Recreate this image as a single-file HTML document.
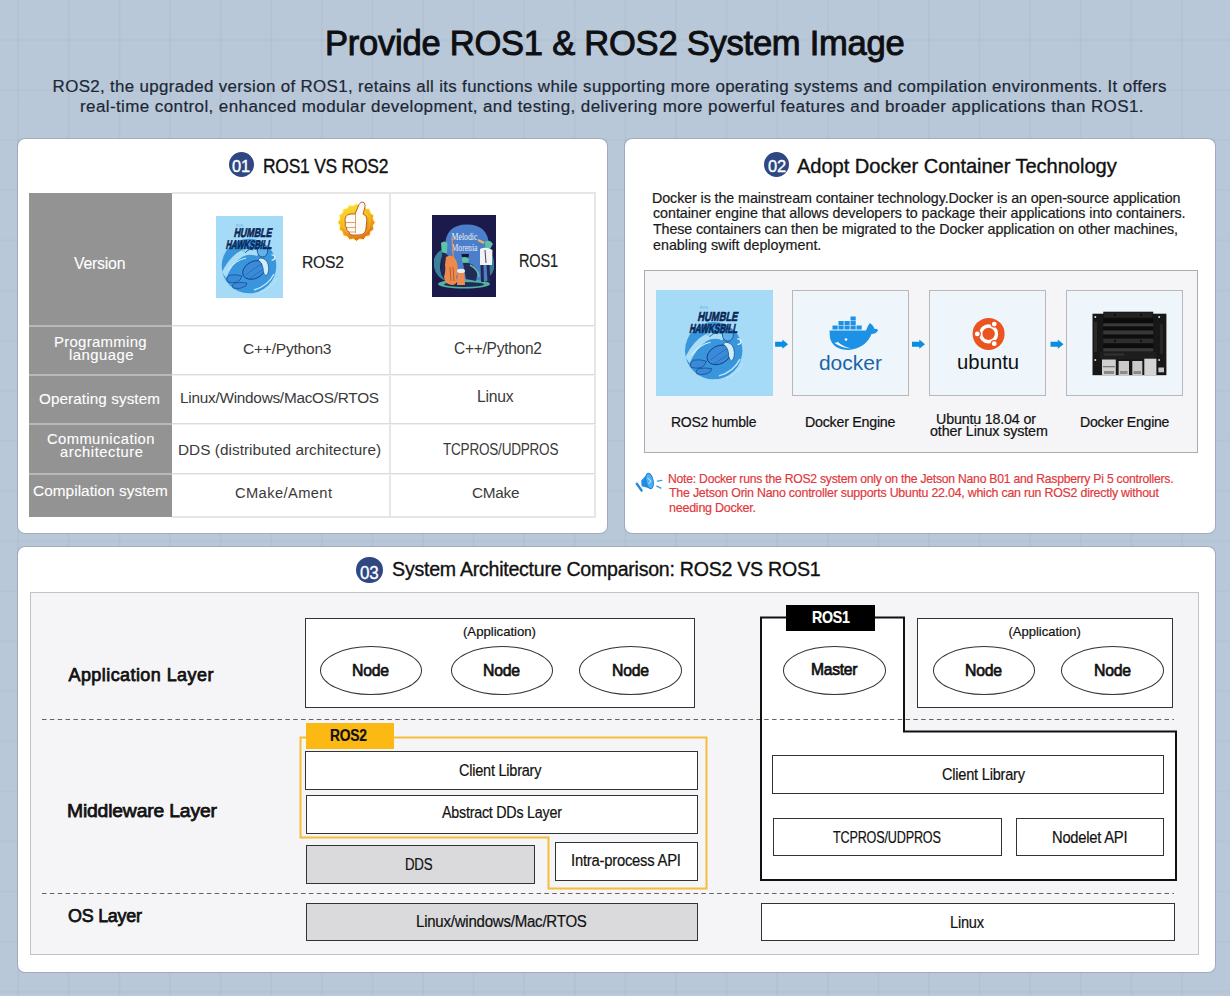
<!DOCTYPE html><html><head><meta charset="utf-8"><style>
*{margin:0;padding:0;box-sizing:border-box}
html,body{width:1230px;height:996px;overflow:hidden}
body{position:relative;font-family:"Liberation Sans",sans-serif;
background-color:#b9c8d8;
background-image:
 linear-gradient(90deg, rgba(140,160,182,0.13) 1.5px, transparent 1.5px),
 linear-gradient(0deg, rgba(140,160,182,0.1) 1.5px, transparent 1.5px);
background-size:50.6px 50.1px;background-position:17.3px 41px;}
.t{position:absolute;white-space:nowrap;-webkit-text-stroke:0.2px currentColor}
.r{position:absolute}
.panel{position:absolute;background:#fff;border-radius:7px;box-shadow:0 0 0 1px rgba(140,150,165,0.55)}
svg{position:absolute;overflow:visible}
</style></head><body>
<div class="panel" style="left:18px;top:139px;width:589px;height:394px"></div>
<div class="panel" style="left:625px;top:139px;width:590px;height:394px"></div>
<div class="panel" style="left:18px;top:547px;width:1197px;height:425px"></div>
<div class="t" style="left:325.26px;top:25.73px;font-size:34.78px;line-height:34.78px;letter-spacing:-0.250px;color:#0d0f12;font-weight:400;transform:scaleX(0.9936);transform-origin:0 0;-webkit-text-stroke:0.95px #0d0f12">Provide ROS1 &amp; ROS2 System Image</div>
<div class="t" style="left:52.62px;top:79.23px;font-size:16.90px;line-height:16.90px;letter-spacing:0.346px;color:#1c2735;font-weight:400;">ROS2, the upgraded version of ROS1, retains all its functions while supporting more operating systems and compilation environments. It offers</div>
<div class="t" style="left:80.14px;top:99.23px;font-size:16.90px;line-height:16.90px;letter-spacing:0.404px;color:#1c2735;font-weight:400;transform:scaleX(1.0051);transform-origin:0 0;">real-time control, enhanced modular development, and testing, delivering more powerful features and broader applications than ROS1.</div>
<div class="r" style="left:228.5px;top:151.5px;width:25px;height:25px;border-radius:50%;background:#2f4782"></div>
<div class="t" style="left:232.02px;top:159.49px;font-size:16.96px;line-height:16.96px;letter-spacing:-0.250px;color:#fff;font-weight:400;transform:scaleX(0.9711);transform-origin:0 0;-webkit-text-stroke:0.35px #fff">01</div>
<div class="t" style="left:263.16px;top:155.78px;font-size:20.14px;line-height:20.14px;letter-spacing:-0.250px;color:#111;font-weight:400;transform:scaleX(0.8656);transform-origin:0 0;-webkit-text-stroke:0.35px #111">ROS1 VS ROS2</div>
<div class="r" style="left:29px;top:193px;width:143px;height:324px;background:#939393"></div>
<div class="r" style="left:29px;top:325px;width:143px;height:2px;background:#b9b9b9"></div>
<div class="r" style="left:29px;top:374px;width:143px;height:2px;background:#b9b9b9"></div>
<div class="r" style="left:29px;top:423px;width:143px;height:2px;background:#b9b9b9"></div>
<div class="r" style="left:29px;top:473px;width:143px;height:2px;background:#b9b9b9"></div>
<div class="r" style="left:172px;top:192px;width:424px;height:2px;background:#e6e6e6"></div>
<div class="r" style="left:172px;top:516px;width:424px;height:2px;background:#e6e6e6"></div>
<div class="r" style="left:594px;top:192px;width:2px;height:326px;background:#e6e6e6"></div>
<div class="r" style="left:389px;top:192px;width:2px;height:326px;background:#e6e6e6"></div>
<div class="r" style="left:172px;top:325px;width:424px;height:1px;background:#dcdcdc"></div>
<div class="r" style="left:172px;top:326px;width:424px;height:1px;background:#f0f0f0"></div>
<div class="r" style="left:172px;top:374px;width:424px;height:1px;background:#dcdcdc"></div>
<div class="r" style="left:172px;top:375px;width:424px;height:1px;background:#f0f0f0"></div>
<div class="r" style="left:172px;top:423px;width:424px;height:1px;background:#dcdcdc"></div>
<div class="r" style="left:172px;top:424px;width:424px;height:1px;background:#f0f0f0"></div>
<div class="r" style="left:172px;top:473px;width:424px;height:1px;background:#dcdcdc"></div>
<div class="r" style="left:172px;top:474px;width:424px;height:1px;background:#f0f0f0"></div>
<div class="t" style="left:74.46px;top:255.18px;font-size:16.38px;line-height:16.38px;letter-spacing:-0.250px;color:#ffffff;font-weight:400;transform:scaleX(0.9699);transform-origin:0 0;-webkit-text-stroke:0.1px #fff">Version</div>
<div class="t" style="left:53.58px;top:334.59px;font-size:14.60px;line-height:14.60px;letter-spacing:0.310px;color:#ffffff;font-weight:400;transform:scaleX(1.0203);transform-origin:0 0;-webkit-text-stroke:0.1px #fff">Programming</div>
<div class="t" style="left:69.10px;top:348.09px;font-size:14.60px;line-height:14.60px;letter-spacing:0.489px;color:#ffffff;font-weight:400;transform:scaleX(1.0163);transform-origin:0 0;-webkit-text-stroke:0.1px #fff">language</div>
<div class="t" style="left:39.04px;top:391.08px;font-size:15.20px;line-height:15.20px;letter-spacing:0.101px;color:#ffffff;font-weight:400;transform:scaleX(1.0036);transform-origin:0 0;-webkit-text-stroke:0.1px #fff">Operating system</div>
<div class="t" style="left:46.52px;top:431.99px;font-size:14.60px;line-height:14.60px;letter-spacing:0.386px;color:#ffffff;font-weight:400;transform:scaleX(1.0134);transform-origin:0 0;-webkit-text-stroke:0.1px #fff">Communication</div>
<div class="t" style="left:60.00px;top:445.19px;font-size:14.60px;line-height:14.60px;letter-spacing:0.574px;color:#ffffff;font-weight:400;transform:scaleX(1.0049);transform-origin:0 0;-webkit-text-stroke:0.1px #fff">architecture</div>
<div class="t" style="left:32.58px;top:483.08px;font-size:15.20px;line-height:15.20px;letter-spacing:0.046px;color:#ffffff;font-weight:400;transform:scaleX(1.0121);transform-origin:0 0;-webkit-text-stroke:0.1px #fff">Compilation system</div>
<div class="t" style="left:301.60px;top:253.54px;font-size:17.25px;line-height:17.25px;letter-spacing:-0.250px;color:#222;font-weight:400;transform:scaleX(0.9095);transform-origin:0 0;">ROS2</div>
<div class="t" style="left:519.08px;top:252.38px;font-size:18.26px;line-height:18.26px;letter-spacing:-0.250px;color:#222;font-weight:400;transform:scaleX(0.7965);transform-origin:0 0;">ROS1</div>
<div class="t" style="left:243.10px;top:340.57px;font-size:15.22px;line-height:15.22px;letter-spacing:-0.217px;color:#3a3a3a;font-weight:400;transform:scaleX(1.0212);transform-origin:0 0;-webkit-text-stroke:0">C++/Python3</div>
<div class="t" style="left:454.14px;top:340.83px;font-size:16.67px;line-height:16.67px;letter-spacing:-0.250px;color:#3a3a3a;font-weight:400;transform:scaleX(0.9283);transform-origin:0 0;-webkit-text-stroke:0">C++/Python2</div>
<div class="t" style="left:180.10px;top:389.57px;font-size:15.22px;line-height:15.22px;letter-spacing:-0.250px;color:#3a3a3a;font-weight:400;transform:scaleX(1.0078);transform-origin:0 0;-webkit-text-stroke:0">Linux/Windows/MacOS/RTOS</div>
<div class="t" style="left:476.60px;top:389.20px;font-size:15.65px;line-height:15.65px;letter-spacing:-0.250px;color:#3a3a3a;font-weight:400;transform:scaleX(1.0041);transform-origin:0 0;-webkit-text-stroke:0">Linux</div>
<div class="t" style="left:178.16px;top:441.57px;font-size:15.22px;line-height:15.22px;letter-spacing:0.048px;color:#3a3a3a;font-weight:400;transform:scaleX(1.0060);transform-origin:0 0;-webkit-text-stroke:0">DDS (distributed architecture)</div>
<div class="t" style="left:442.54px;top:441.65px;font-size:15.94px;line-height:15.94px;letter-spacing:-0.250px;color:#3a3a3a;font-weight:400;transform:scaleX(0.8487);transform-origin:0 0;-webkit-text-stroke:0">TCPROS/UDPROS</div>
<div class="t" style="left:234.62px;top:485.68px;font-size:14.49px;line-height:14.49px;letter-spacing:0.399px;color:#3a3a3a;font-weight:400;transform:scaleX(1.0127);transform-origin:0 0;-webkit-text-stroke:0">CMake/Ament</div>
<div class="t" style="left:472.14px;top:484.57px;font-size:15.22px;line-height:15.22px;letter-spacing:-0.250px;color:#3a3a3a;font-weight:400;transform:scaleX(1.0068);transform-origin:0 0;-webkit-text-stroke:0">CMake</div>
<svg style="left:216px;top:216px;background:#a5dbf6;overflow:hidden" width="67" height="82" viewBox="0 0 67 82" preserveAspectRatio="xMidYMid meet">
<rect x="-40" y="-40" width="150" height="170" fill="#a5dbf6"/>
<text x="20" y="10.6" font-family="Liberation Sans" font-size="3.4" fill="#6aa6d8">ROS</text>
<g transform="translate(0 -4)">
<circle cx="33" cy="54" r="27.3" fill="#3996dc"/>
<path d="M6 60 Q14 44 26 38 Q36 35 44 40 L41 44 Q33 41 26 45 Q16 52 10 66 Z" fill="#a9ddf6"/>
<path d="M12 58 Q20 48 30 46" stroke="#d6f0fb" stroke-width="1" fill="none"/>
<path d="M24 68 Q20 72 12 70 Q9 66 14 63 Q20 62 26 64 Z" fill="#3a8ad8" stroke="#0d3b80" stroke-width="0.6"/>
<path d="M30 74 Q24 78 17 76 Q15 73 19 71 Q25 70 31 71 Z" fill="#3a8ad8" stroke="#0d3b80" stroke-width="0.6"/>
<ellipse cx="38" cy="58" rx="12" ry="8.5" transform="rotate(-28 38 58)" fill="#3a8ad8" stroke="#0d3b80" stroke-width="0.8"/>
<path d="M30 63 Q38 56 46 52 M33 67 Q41 61 48 57" stroke="#1f66b8" stroke-width="0.7" fill="none"/>
<path d="M44 46 Q50 46 52 52 Q54 60 50 64 Q47 62 47 56 Q46 50 42 48 Z" fill="#cfeefb" stroke="#0d3b80" stroke-width="0.6"/>
<ellipse cx="46.5" cy="39" rx="5.2" ry="6" fill="#5fb1ea" stroke="#0d3b80" stroke-width="0.7"/>
<path d="M29 41 Q33 36 37 38" stroke="#0d3b80" stroke-width="0.8" fill="none"/>
<circle cx="27.5" cy="38.5" r="1.6" fill="#7cc6f0"/>
<path d="M55.5 43 A2.6 2.6 0 1 1 55.6 48" stroke="#e8f7fd" stroke-width="1.2" fill="none"/>
<path d="M38 78 Q52 74 58 62" stroke="#bde6f9" stroke-width="1.4" fill="none"/>
<path d="M44 80 Q56 76 61 66" stroke="#bde6f9" stroke-width="0.9" fill="none"/>
</g>
<g transform="skewX(-12)" font-family="Liberation Sans" font-weight="700" fill="#0b2656" stroke="#0b2656" stroke-width="0.6">
<text x="41" y="21.4" text-anchor="middle" font-size="12.5" textLength="38" lengthAdjust="spacingAndGlyphs">HUMBLE</text>
<text x="39.5" y="33.2" text-anchor="middle" font-size="12.5" textLength="46" lengthAdjust="spacingAndGlyphs">HAWKSBILL</text>
</g>
</svg>
<svg style="left:432px;top:215px;overflow:hidden" width="64" height="82" viewBox="0 0 64 82" preserveAspectRatio="none">
<rect width="64" height="82" fill="#1b1a4b"/>
<path d="M13 66 L13 32 Q13 9.5 35 9.5 Q57 9.5 57 32 L57 66 Z" fill="#4b7fcb"/>
<path d="M2 44 Q6 34 14 34 Q8 42 8 52 Q8 60 14 66 Q4 62 2 52 Z" fill="#3f95a8" opacity="0.85"/>
<path d="M62 46 Q60 36 54 34 Q58 44 57 54 Q56 62 50 66 Q60 62 62 54 Z" fill="#3f95a8" opacity="0.8"/>
<ellipse cx="32" cy="69" rx="26" ry="4.6" fill="#4fb3a0"/>
<ellipse cx="32" cy="69.5" rx="20" ry="2.4" fill="#1e2a5a"/>
<text x="19.5" y="25" font-family="Liberation Serif" font-size="9.5" fill="#eef0f4" textLength="26" lengthAdjust="spacingAndGlyphs">Melodic</text>
<text x="19.5" y="36" font-family="Liberation Serif" font-size="9.5" fill="#eef0f4" textLength="26" lengthAdjust="spacingAndGlyphs">Morenia</text>
<path d="M9 28 Q12 25 15.5 28 L15 38 Q11 39 9.5 35 Z" fill="#5cc3a6"/>
<path d="M10 38 Q14 37 17 42 L16 62 L9 60 Z" fill="#232a55"/>
<path d="M20 22 L22.5 60" stroke="#e9894a" stroke-width="1.3"/>
<path d="M14 42 Q22 38 25 48 Q27 56 24 62 Q27 68 21 70 Q13 70 12 62 Q14 56 13 50 Z" fill="#ee8a4c"/>
<path d="M18 52 L19 66 M21 52 L22 66" stroke="#8a3d1c" stroke-width="0.6"/>
<path d="M29.5 39 L37 39 L36.5 42.5 L30 42.5 Z" fill="#141433"/>
<path d="M30 42.5 Q34 41 37 44 L36 48 Q31 49 30 46 Z" fill="#5cc3a6"/>
<path d="M31 48 Q40 46 46 56 L44 66 L34 64 Z" fill="#222a56"/>
<path d="M38 50 Q46 54 47 62" stroke="#5cc3a6" stroke-width="1.6" fill="none"/>
<ellipse cx="29" cy="56" rx="4" ry="2.2" fill="#e8edf2"/>
<path d="M25.5 58 L32.5 58 L33 70 L25 70 Z" fill="#ee8a4c"/>
<path d="M46 25 L52 28" stroke="#f2b552" stroke-width="2"/>
<path d="M53 26.5 Q58 24 61 29 L58 34 L53.5 33 Z" fill="#5cc3a6"/>
<path d="M48 34 Q54 31 60.5 35 L60 50 L48 50 Z" fill="#f1f3f5"/>
<path d="M53 35 L54 48" stroke="#1b1a4b" stroke-width="0.8"/>
<path d="M50 50 L50.5 67 M56 50 L57 67" stroke="#232a55" stroke-width="3"/>
</svg>
<svg style="left:0;top:0" width="1230" height="996">
<defs><linearGradient id="tg" x1="0.2" y1="0" x2="0.6" y2="1"><stop offset="0" stop-color="#fde533"/><stop offset="0.5" stop-color="#f4b414"/><stop offset="1" stop-color="#e26a10"/></linearGradient></defs>
<polygon points="375.30,222.40 373.09,225.70 373.87,229.59 370.57,231.80 369.79,235.69 365.90,236.47 363.69,239.77 359.80,238.99 356.50,241.20 353.20,238.99 349.31,239.77 347.10,236.47 343.21,235.69 342.43,231.80 339.13,229.59 339.91,225.70 337.70,222.40 339.91,219.10 339.13,215.21 342.43,213.00 343.21,209.11 347.10,208.33 349.31,205.03 353.20,205.81 356.50,203.60 359.80,205.81 363.69,205.03 365.90,208.33 369.79,209.11 370.57,213.00 373.87,215.21 373.09,219.10" fill="url(#tg)" stroke="#fff6c0" stroke-width="1"/>
<circle cx="356.5" cy="222.4" r="13.54" fill="none" stroke="#f9d54a" stroke-width="0.8" opacity="0.6"/>
<path d="M355 214 L359 204.5 Q361 200.5 364 202.5 Q366 205 364.5 209 L363 214 Q367 215.5 366.8 220.5 L365.8 230 Q364.5 235 358.5 235 L352 235 Q349 235 349 232 Q346 231 346.5 227.5 Q344.5 226 345.5 222.5 Q344 220 346 216.5 Q347 214 351 214 Z" fill="#fffaf2" stroke="#a8552a" stroke-width="0.9"/>
<path d="M346 222.5 H355.5 M346.5 227.5 H355.5 M349 232 H355.5 M355.5 214 V233" stroke="#c87a4a" stroke-width="0.7" fill="none"/>
</svg>
<div class="r" style="left:764.2px;top:151.5px;width:25px;height:25px;border-radius:50%;background:#2f4782"></div>
<div class="t" style="left:767.54px;top:159.49px;font-size:16.96px;line-height:16.96px;letter-spacing:-0.250px;color:#fff;font-weight:400;transform:scaleX(0.9711);transform-origin:0 0;-webkit-text-stroke:0.35px #fff">02</div>
<div class="t" style="left:797.00px;top:155.78px;font-size:20.14px;line-height:20.14px;letter-spacing:-0.066px;color:#111;font-weight:400;-webkit-text-stroke:0.35px #111">Adopt Docker Container Technology</div>
<div class="t" style="left:652.10px;top:190.73px;font-size:14.20px;line-height:14.20px;letter-spacing:-0.084px;color:#1a1a1a;font-weight:400;transform:scaleX(1.0061);transform-origin:0 0;">Docker is the mainstream container technology.Docker is an open-source application</div>
<div class="t" style="left:653.00px;top:206.43px;font-size:14.20px;line-height:14.20px;letter-spacing:-0.046px;color:#1a1a1a;font-weight:400;transform:scaleX(1.0061);transform-origin:0 0;">container engine that allows developers to package their applications into containers.</div>
<div class="t" style="left:653.00px;top:222.43px;font-size:14.20px;line-height:14.20px;letter-spacing:-0.109px;color:#1a1a1a;font-weight:400;transform:scaleX(1.0058);transform-origin:0 0;">These containers can then be migrated to the Docker application on other machines,</div>
<div class="t" style="left:653.00px;top:238.13px;font-size:14.20px;line-height:14.20px;letter-spacing:0.005px;color:#1a1a1a;font-weight:400;transform:scaleX(1.0060);transform-origin:0 0;">enabling swift deployment.</div>
<div class="r" style="left:644px;top:270px;width:554px;height:183px;background:#f5f5f7;border:1px solid #acacac"></div>
<div class="r" style="left:656px;top:290px;width:117px;height:106px;background:#a3dbf7"></div>
<div class="r" style="left:792px;top:290px;width:117px;height:106px;background:#eff6fb;border:1px solid #b8b8b8"></div>
<div class="r" style="left:929px;top:290px;width:117px;height:106px;background:#eff6fb;border:1px solid #b8b8b8"></div>
<div class="r" style="left:1066px;top:290px;width:117px;height:106px;background:#eff6fb;border:1px solid #b8b8b8"></div>
<svg style="left:657px;top:291px;background:#a5dbf6;overflow:hidden" width="115" height="104" viewBox="-20.9 -6.73 109.3 98.9" preserveAspectRatio="xMidYMid meet">
<rect x="-40" y="-40" width="150" height="170" fill="#a5dbf6"/>
<text x="20" y="10.6" font-family="Liberation Sans" font-size="3.4" fill="#6aa6d8">ROS</text>
<g transform="translate(0 -4)">
<circle cx="33" cy="54" r="27.3" fill="#3996dc"/>
<path d="M6 60 Q14 44 26 38 Q36 35 44 40 L41 44 Q33 41 26 45 Q16 52 10 66 Z" fill="#a9ddf6"/>
<path d="M12 58 Q20 48 30 46" stroke="#d6f0fb" stroke-width="1" fill="none"/>
<path d="M24 68 Q20 72 12 70 Q9 66 14 63 Q20 62 26 64 Z" fill="#3a8ad8" stroke="#0d3b80" stroke-width="0.6"/>
<path d="M30 74 Q24 78 17 76 Q15 73 19 71 Q25 70 31 71 Z" fill="#3a8ad8" stroke="#0d3b80" stroke-width="0.6"/>
<ellipse cx="38" cy="58" rx="12" ry="8.5" transform="rotate(-28 38 58)" fill="#3a8ad8" stroke="#0d3b80" stroke-width="0.8"/>
<path d="M30 63 Q38 56 46 52 M33 67 Q41 61 48 57" stroke="#1f66b8" stroke-width="0.7" fill="none"/>
<path d="M44 46 Q50 46 52 52 Q54 60 50 64 Q47 62 47 56 Q46 50 42 48 Z" fill="#cfeefb" stroke="#0d3b80" stroke-width="0.6"/>
<ellipse cx="46.5" cy="39" rx="5.2" ry="6" fill="#5fb1ea" stroke="#0d3b80" stroke-width="0.7"/>
<path d="M29 41 Q33 36 37 38" stroke="#0d3b80" stroke-width="0.8" fill="none"/>
<circle cx="27.5" cy="38.5" r="1.6" fill="#7cc6f0"/>
<path d="M55.5 43 A2.6 2.6 0 1 1 55.6 48" stroke="#e8f7fd" stroke-width="1.2" fill="none"/>
<path d="M38 78 Q52 74 58 62" stroke="#bde6f9" stroke-width="1.4" fill="none"/>
<path d="M44 80 Q56 76 61 66" stroke="#bde6f9" stroke-width="0.9" fill="none"/>
</g>
<g transform="skewX(-12)" font-family="Liberation Sans" font-weight="700" fill="#0b2656" stroke="#0b2656" stroke-width="0.6">
<text x="41" y="21.4" text-anchor="middle" font-size="12.5" textLength="38" lengthAdjust="spacingAndGlyphs">HUMBLE</text>
<text x="39.5" y="33.2" text-anchor="middle" font-size="12.5" textLength="46" lengthAdjust="spacingAndGlyphs">HAWKSBILL</text>
</g>
</svg>
<svg style="left:0;top:0" width="1230" height="996">
<rect x="850.5" y="316.5" width="5.2" height="4" fill="#1d91e6"/><rect x="838.5" y="321" width="5.2" height="4" fill="#1d91e6"/><rect x="844.5" y="321" width="5.2" height="4" fill="#1d91e6"/><rect x="850.5" y="321" width="5.2" height="4" fill="#1d91e6"/><rect x="832.5" y="325.5" width="5.2" height="4" fill="#1d91e6"/><rect x="838.5" y="325.5" width="5.2" height="4" fill="#1d91e6"/><rect x="844.5" y="325.5" width="5.2" height="4" fill="#1d91e6"/><rect x="850.5" y="325.5" width="5.2" height="4" fill="#1d91e6"/><rect x="856.5" y="325.5" width="5.2" height="4" fill="#1d91e6"/>
<path d="M829.5 330.5 H866 Q868 325 870 323 Q874 326 874.5 329 Q877.5 328 878 330.5 Q876 334 871.5 334 Q866 348 849 350 Q833 350 830 338 Z" fill="#1d91e6"/>
<path d="M834.5 343 Q842 348 851 348.5 Q842 346 838 342 Z" fill="#fff"/>
<circle cx="846" cy="339.5" r="1.3" fill="#fff"/>
<text x="850.4" y="370" text-anchor="middle" font-family="Liberation Sans" font-size="19.5" fill="#1b64a8" textLength="63" lengthAdjust="spacingAndGlyphs">docker</text>
</svg>
<svg style="left:0;top:0" width="1230" height="996">
<circle cx="988.6" cy="333.9" r="16" fill="#e95420"/>
<circle cx="988.6" cy="333.9" r="7.9" fill="none" stroke="#fff" stroke-width="3.4"/>
<circle cx="977.30" cy="333.90" r="3.6" fill="#e95420"/><circle cx="977.30" cy="333.90" r="2.4" fill="#fff"/><circle cx="994.25" cy="324.11" r="3.6" fill="#e95420"/><circle cx="994.25" cy="324.11" r="2.4" fill="#fff"/><circle cx="994.25" cy="343.69" r="3.6" fill="#e95420"/><circle cx="994.25" cy="343.69" r="2.4" fill="#fff"/>
<text x="988.1" y="368.7" text-anchor="middle" font-family="Liberation Sans" font-size="20" fill="#111" textLength="62" lengthAdjust="spacingAndGlyphs">ubuntu</text>
</svg>
<svg style="left:0;top:0" width="1230" height="996">
<rect x="1092.5" y="313.7" width="73.9" height="61.5" fill="#171717"/>
<rect x="1094" y="322" width="3" height="30" fill="#2a2a2a"/>
<rect x="1160" y="324" width="3" height="30" fill="#262626"/>
<rect x="1103.3" y="311.7" width="49.9" height="6.8" fill="#141414"/>
<rect x="1104" y="312.5" width="48.5" height="5" fill="#222"/>
<rect x="1103.3" y="318.5" width="49.9" height="4.8" fill="#0b0b0b"/><rect x="1103.3" y="323.3" width="49.9" height="3.2" fill="#3a3a3a"/><rect x="1103.3" y="326.5" width="49.9" height="4.0" fill="#0d0d0d"/><rect x="1103.3" y="330.5" width="49.9" height="4.1" fill="#383838"/><rect x="1103.3" y="334.6" width="49.9" height="4.0" fill="#0d0d0d"/><rect x="1103.3" y="338.6" width="49.9" height="4.8" fill="#2e2e2e"/><rect x="1103.3" y="343.4" width="49.9" height="4.8" fill="#0c0c0c"/><rect x="1103.3" y="348.2" width="49.9" height="3.2" fill="#3a3a3a"/>
<circle cx="1115" cy="315" r="0.9" fill="#000"/><circle cx="1141" cy="315" r="0.9" fill="#000"/>
<circle cx="1115" cy="341" r="0.9" fill="#000"/><circle cx="1141" cy="341" r="0.9" fill="#000"/>
<rect x="1100" y="352" width="56" height="7" fill="#1d1d1d"/>
<rect x="1104" y="353.5" width="20" height="2" fill="#333"/>
<rect x="1102" y="359.5" width="13.8" height="15.5" fill="#cfcfcf"/>
<rect x="1103" y="366" width="11.8" height="1.3" fill="#777"/>
<rect x="1104" y="371" width="10" height="3" fill="#8a8a8a"/>
<rect x="1118.6" y="361" width="10.4" height="14" fill="#c9c9c9"/>
<rect x="1120" y="371" width="7.5" height="3" fill="#8a8a8a"/>
<rect x="1132.3" y="361" width="10" height="14" fill="#c9c9c9"/>
<rect x="1133.5" y="371" width="7.5" height="3" fill="#8a8a8a"/>
<rect x="1144.3" y="358.7" width="12.1" height="16.3" fill="#d4d4d4"/>
<rect x="1158.4" y="367.5" width="5.6" height="4.8" fill="#c4c4c4"/>
<circle cx="1095.3" cy="316.9" r="1" fill="#e0e0e0"/><circle cx="1159.2" cy="316.9" r="1" fill="#e0e0e0"/>
<circle cx="1095.3" cy="359.9" r="1" fill="#e0e0e0"/><circle cx="1159.2" cy="359.9" r="1" fill="#d0d0d0"/>
</svg>
<svg style="left:0;top:0" width="1230" height="996"><path d="M775.1 341.7 H782.4 V339.59999999999997 L788.1 344.2 L782.4 348.8 V346.7 H775.1 Z" fill="#0a8fe0"/></svg>
<svg style="left:0;top:0" width="1230" height="996"><path d="M912 341.7 H919.3 V339.59999999999997 L925 344.2 L919.3 348.8 V346.7 H912 Z" fill="#0a8fe0"/></svg>
<svg style="left:0;top:0" width="1230" height="996"><path d="M1050.5 341.7 H1057.8 V339.59999999999997 L1063.5 344.2 L1057.8 348.8 V346.7 H1050.5 Z" fill="#0a8fe0"/></svg>
<svg style="left:0;top:0" width="1230" height="996">
<path d="M641.2 480.4 L648 473.2 L651.2 488.8 L641.6 486.2 Z" fill="#1f8fe6"/>
<ellipse cx="649.6" cy="481" rx="3.6" ry="7.9" transform="rotate(-11 649.6 481)" fill="#4db0f2" stroke="#1a82d8" stroke-width="1"/>
<path d="M647.5 478 L651 481 L648.5 484" stroke="#dff2fd" stroke-width="0.9" fill="none"/>
<path d="M636.8 483.8 L641.6 490.5" stroke="#2a8ad6" stroke-width="2.4" stroke-linecap="round"/>
<path d="M657.4 481.2 L661.8 480.3 M656.8 486.1 L660.8 488.2" stroke="#3a9ae0" stroke-width="1.3" stroke-linecap="round"/>
</svg>
<div class="t" style="left:670.62px;top:415.48px;font-size:14.49px;line-height:14.49px;letter-spacing:-0.250px;color:#111;font-weight:400;transform:scaleX(0.9662);transform-origin:0 0;">ROS2 humble</div>
<div class="t" style="left:804.62px;top:415.48px;font-size:14.49px;line-height:14.49px;letter-spacing:-0.250px;color:#111;font-weight:400;transform:scaleX(0.9832);transform-origin:0 0;">Docker Engine</div>
<div class="t" style="left:936.10px;top:412.23px;font-size:14.20px;line-height:14.20px;letter-spacing:-0.174px;color:#111;font-weight:400;transform:scaleX(1.0062);transform-origin:0 0;">Ubuntu 18.04 or</div>
<div class="t" style="left:929.96px;top:424.33px;font-size:14.20px;line-height:14.20px;letter-spacing:-0.120px;color:#111;font-weight:400;transform:scaleX(1.0069);transform-origin:0 0;">other Linux system</div>
<div class="t" style="left:1079.60px;top:415.48px;font-size:14.49px;line-height:14.49px;letter-spacing:-0.250px;color:#111;font-weight:400;transform:scaleX(0.9723);transform-origin:0 0;">Docker Engine</div>
<div class="t" style="left:668.10px;top:471.91px;font-size:13.04px;line-height:13.04px;letter-spacing:-0.250px;color:#e2383d;font-weight:400;transform:scaleX(0.9340);transform-origin:0 0;">Note: Docker runs the ROS2 system only on the Jetson Nano B01 and Raspberry Pi 5 controllers.</div>
<div class="t" style="left:669.00px;top:486.21px;font-size:13.04px;line-height:13.04px;letter-spacing:-0.250px;color:#e2383d;font-weight:400;transform:scaleX(0.9524);transform-origin:0 0;">The Jetson Orin Nano controller supports Ubuntu 22.04, which can run ROS2 directly without</div>
<div class="t" style="left:669.00px;top:501.11px;font-size:13.04px;line-height:13.04px;letter-spacing:-0.250px;color:#e2383d;font-weight:400;transform:scaleX(0.9589);transform-origin:0 0;">needing Docker.</div>
<div class="r" style="left:356.2px;top:556.9px;width:26.6px;height:26.6px;border-radius:50%;background:#2f4782"></div>
<div class="t" style="left:359.73px;top:564.27px;font-size:18.04px;line-height:18.04px;letter-spacing:-0.250px;color:#fff;font-weight:400;transform:scaleX(0.9432);transform-origin:0 0;-webkit-text-stroke:0.35px #fff">03</div>
<div class="t" style="left:392.10px;top:559.87px;font-size:19.57px;line-height:19.57px;letter-spacing:-0.250px;color:#111;font-weight:400;-webkit-text-stroke:0.35px #111">System Architecture Comparison: ROS2 VS ROS1</div>
<div class="r" style="left:30px;top:592px;width:1169px;height:363px;background:#f5f5f7;border:1px solid #c3c3c6"></div>
<svg style="left:0;top:0" width="1230" height="996"><path d="M761 617.5 H904 V731.5 H1176 V880 H761 Z" fill="#fff"/></svg>
<svg style="left:0;top:0" width="1230" height="996"><line x1="42" y1="719.5" x2="1174" y2="719.5" stroke="#626262" stroke-width="1" stroke-dasharray="4.5 3.35"/></svg>
<svg style="left:0;top:0" width="1230" height="996"><line x1="42" y1="893.5" x2="1174" y2="893.5" stroke="#626262" stroke-width="1" stroke-dasharray="4.5 3.35"/></svg>
<div class="t" style="left:68.48px;top:667.42px;font-size:17.97px;line-height:17.97px;letter-spacing:0.448px;color:#111;font-weight:400;-webkit-text-stroke:0.75px #111">Application Layer</div>
<div class="t" style="left:66.58px;top:800.92px;font-size:19.28px;line-height:19.28px;letter-spacing:-0.185px;color:#111;font-weight:400;transform:scaleX(1.0041);transform-origin:0 0;-webkit-text-stroke:0.75px #111">Middleware Layer</div>
<div class="t" style="left:67.52px;top:907.06px;font-size:18.41px;line-height:18.41px;letter-spacing:-0.250px;color:#111;font-weight:400;transform:scaleX(0.9735);transform-origin:0 0;-webkit-text-stroke:0.75px #111">OS Layer</div>
<div class="r" style="left:305px;top:618px;width:390px;height:90px;background:#fff;border:1px solid #333"></div>
<div class="t" style="left:463.08px;top:624.95px;font-size:13.00px;line-height:13.00px;letter-spacing:-0.023px;color:#111;font-weight:400;transform:scaleX(1.0141);transform-origin:0 0;">(Application)</div>
<div class="r" style="left:320px;top:646px;width:102px;height:49px;border:1px solid #333;border-radius:50%;background:#fff"></div>
<div class="r" style="left:451px;top:646px;width:102px;height:49px;border:1px solid #333;border-radius:50%;background:#fff"></div>
<div class="r" style="left:579px;top:646px;width:103px;height:49px;border:1px solid #333;border-radius:50%;background:#fff"></div>
<div class="t" style="left:352.10px;top:663.03px;font-size:16.67px;line-height:16.67px;letter-spacing:-0.250px;color:#111;font-weight:400;transform:scaleX(0.9474);transform-origin:0 0;-webkit-text-stroke:0.7px #111">Node</div>
<div class="t" style="left:483.10px;top:663.03px;font-size:16.67px;line-height:16.67px;letter-spacing:-0.250px;color:#111;font-weight:400;transform:scaleX(0.9474);transform-origin:0 0;-webkit-text-stroke:0.7px #111">Node</div>
<div class="t" style="left:611.60px;top:663.03px;font-size:16.67px;line-height:16.67px;letter-spacing:-0.250px;color:#111;font-weight:400;transform:scaleX(0.9474);transform-origin:0 0;-webkit-text-stroke:0.7px #111">Node</div>
<svg style="left:0;top:0" width="1230" height="996"><path d="M300.5 737.5 H706.5 V888.5 H548.5 V837.5 H300.5 Z" fill="none" stroke="#f5bd3c" stroke-width="2"/></svg>
<div class="r" style="left:306px;top:723px;width:88px;height:26px;background:#fcb813"></div>
<div class="t" style="left:330.10px;top:727.66px;font-size:16.52px;line-height:16.52px;letter-spacing:-0.250px;color:#111;font-weight:700;transform:scaleX(0.8360);transform-origin:0 0;">ROS2</div>
<div class="r" style="left:305px;top:751px;width:393px;height:39px;background:#fff;border:1px solid #333"></div>
<div class="t" style="left:459.00px;top:761.70px;font-size:16.23px;line-height:16.23px;letter-spacing:-0.250px;color:#111;font-weight:400;transform:scaleX(0.8933);transform-origin:0 0;">Client Library</div>
<div class="r" style="left:306px;top:795px;width:392px;height:39px;background:#fff;border:1px solid #333"></div>
<div class="t" style="left:442.00px;top:804.00px;font-size:16.23px;line-height:16.23px;letter-spacing:-0.250px;color:#111;font-weight:400;transform:scaleX(0.8792);transform-origin:0 0;">Abstract DDs Layer</div>
<div class="r" style="left:306px;top:845px;width:229px;height:39px;background:#dadadc;border:1px solid #333"></div>
<div class="t" style="left:405.14px;top:855.50px;font-size:16.23px;line-height:16.23px;letter-spacing:-0.250px;color:#111;font-weight:400;transform:scaleX(0.8173);transform-origin:0 0;">DDS</div>
<div class="r" style="left:555px;top:842px;width:143px;height:39px;background:#fff;border:1px solid #333"></div>
<div class="t" style="left:570.60px;top:851.90px;font-size:16.23px;line-height:16.23px;letter-spacing:-0.250px;color:#111;font-weight:400;transform:scaleX(0.9132);transform-origin:0 0;">Intra-process API</div>
<div class="r" style="left:306px;top:903px;width:392px;height:38px;background:#dadadc;border:1px solid #333"></div>
<div class="t" style="left:416.10px;top:912.90px;font-size:16.23px;line-height:16.23px;letter-spacing:-0.250px;color:#111;font-weight:400;transform:scaleX(0.9269);transform-origin:0 0;">Linux/windows/Mac/RTOS</div>
<svg style="left:0;top:0" width="1230" height="996"><path d="M761 617.5 H904 V731.5 H1176 V880 H761 Z" fill="none" stroke="#111" stroke-width="2"/></svg>
<div class="r" style="left:786px;top:605px;width:89px;height:26px;background:#000"></div>
<div class="t" style="left:812.10px;top:608.72px;font-size:17.39px;line-height:17.39px;letter-spacing:-0.250px;color:#fff;font-weight:700;transform:scaleX(0.8153);transform-origin:0 0;">ROS1</div>
<div class="r" style="left:783px;top:646px;width:103px;height:49px;border:1px solid #333;border-radius:50%;background:#fff"></div>
<div class="t" style="left:810.60px;top:661.95px;font-size:15.94px;line-height:15.94px;letter-spacing:-0.250px;color:#111;font-weight:400;transform:scaleX(0.9801);transform-origin:0 0;-webkit-text-stroke:0.7px #111">Master</div>
<div class="r" style="left:917px;top:618px;width:256px;height:90px;background:#fff;border:1px solid #333"></div>
<div class="t" style="left:1008.52px;top:624.95px;font-size:13.00px;line-height:13.00px;letter-spacing:0.002px;color:#111;font-weight:400;">(Application)</div>
<div class="r" style="left:933px;top:646px;width:102px;height:49px;border:1px solid #333;border-radius:50%;background:#fff"></div>
<div class="r" style="left:1061px;top:646px;width:103px;height:49px;border:1px solid #333;border-radius:50%;background:#fff"></div>
<div class="t" style="left:965.10px;top:663.03px;font-size:16.67px;line-height:16.67px;letter-spacing:-0.250px;color:#111;font-weight:400;transform:scaleX(0.9474);transform-origin:0 0;-webkit-text-stroke:0.7px #111">Node</div>
<div class="t" style="left:1093.60px;top:663.03px;font-size:16.67px;line-height:16.67px;letter-spacing:-0.250px;color:#111;font-weight:400;transform:scaleX(0.9474);transform-origin:0 0;-webkit-text-stroke:0.7px #111">Node</div>
<div class="r" style="left:772px;top:755px;width:392px;height:39px;background:#fff;border:1px solid #333"></div>
<div class="t" style="left:942.00px;top:766.00px;font-size:16.23px;line-height:16.23px;letter-spacing:-0.250px;color:#111;font-weight:400;transform:scaleX(0.8988);transform-origin:0 0;">Client Library</div>
<div class="r" style="left:773px;top:818px;width:229px;height:38px;background:#fff;border:1px solid #333"></div>
<div class="t" style="left:833.04px;top:828.90px;font-size:16.23px;line-height:16.23px;letter-spacing:-0.250px;color:#111;font-weight:400;transform:scaleX(0.7791);transform-origin:0 0;">TCPROS/UDPROS</div>
<div class="r" style="left:1016px;top:818px;width:148px;height:38px;background:#fff;border:1px solid #333"></div>
<div class="t" style="left:1052.10px;top:828.90px;font-size:16.23px;line-height:16.23px;letter-spacing:-0.250px;color:#111;font-weight:400;transform:scaleX(0.9079);transform-origin:0 0;">Nodelet API</div>
<div class="r" style="left:761px;top:903px;width:414px;height:38px;background:#fff;border:1px solid #333"></div>
<div class="t" style="left:950.10px;top:914.40px;font-size:16.23px;line-height:16.23px;letter-spacing:-0.250px;color:#111;font-weight:400;transform:scaleX(0.9008);transform-origin:0 0;">Linux</div>
</body></html>
